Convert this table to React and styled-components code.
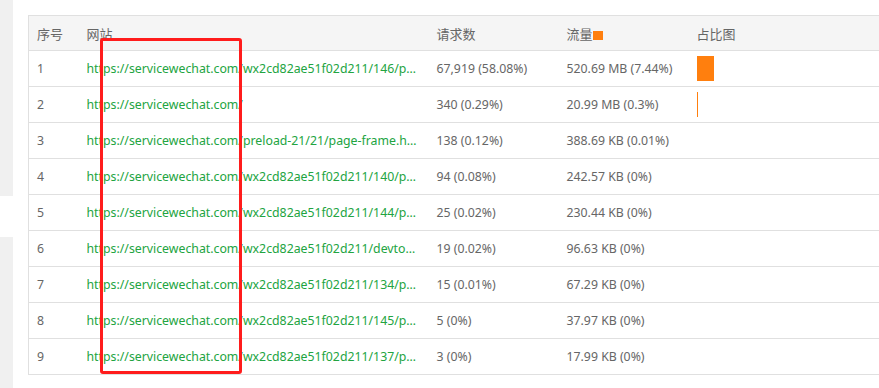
import styled, { createGlobalStyle } from "styled-components";

const rows = [
    {url: "https://servicewechat.com/wx2cd82ae51f02d211/146/page-frame.html", req: "67,919 (58.08%)", flow: "520.69 MB (7.44%)", bar: 17},
    {url: "https://servicewechat.com/", req: "340 (0.29%)", flow: "20.99 MB (0.3%)", bar: 1},
    {url: "https://servicewechat.com/preload-21/21/page-frame.html", req: "138 (0.12%)", flow: "388.69 KB (0.01%)", bar: 0},
    {url: "https://servicewechat.com/wx2cd82ae51f02d211/140/page-frame.html", req: "94 (0.08%)", flow: "242.57 KB (0%)", bar: 0},
    {url: "https://servicewechat.com/wx2cd82ae51f02d211/144/page-frame.html", req: "25 (0.02%)", flow: "230.44 KB (0%)", bar: 0},
    {url: "https://servicewechat.com/wx2cd82ae51f02d211/devtools/page-frame.html", req: "19 (0.02%)", flow: "96.63 KB (0%)", bar: 0},
    {url: "https://servicewechat.com/wx2cd82ae51f02d211/134/page-frame.html", req: "15 (0.01%)", flow: "67.29 KB (0%)", bar: 0},
    {url: "https://servicewechat.com/wx2cd82ae51f02d211/145/page-frame.html", req: "5 (0%)", flow: "37.97 KB (0%)", bar: 0},
    {url: "https://servicewechat.com/wx2cd82ae51f02d211/137/page-frame.html", req: "3 (0%)", flow: "17.99 KB (0%)", bar: 0},
];

function App() {
    return (
        <>
            <GlobalStyle/>
            <Page>
                <SideStrip>
                    <StripBlock $height={196}/>
                    <StripGap/>
                    <StripBlock/>
                </SideStrip>
                <Content>
                    <Table>
                        <colgroup>
                            <col style={{width: 50}}/>
                            <col style={{width: 350}}/>
                            <col style={{width: 130}}/>
                            <col style={{width: 130}}/>
                            <col/>
                        </colgroup>
                        <thead>
                        <tr>
                            <th>序号</th>
                            <th>网站</th>
                            <th>请求数</th>
                            <th>流量<Swatch/></th>
                            <th>占比图</th>
                        </tr>
                        </thead>
                        <tbody>
                        {rows.map((row, index) => (
                            <tr key={index}>
                                <td>{index + 1}</td>
                                <td><Link href="#">{row.url}</Link></td>
                                <td>{row.req}</td>
                                <td>{row.flow}</td>
                                <td>{row.bar > 0 && <Bar style={{width: row.bar}}/>}</td>
                            </tr>
                        ))}
                        </tbody>
                    </Table>
                    <Highlight/>
                </Content>
            </Page>
        </>
    );
}

const GlobalStyle = createGlobalStyle`
  html, body {
    margin: 0;
    padding: 0;
    background: #fff;
    overflow: hidden;
  }

  body {
    font-family: "Noto Sans", "Noto Sans CJK SC", sans-serif;
    font-size: 12.3px;
    color: #666;
  }
`;

const Page = styled.div`
  display: flex;
  width: 879px;
  height: 388px;
  overflow: hidden;
`;

const SideStrip = styled.div`
  display: flex;
  flex-direction: column;
  width: 13px;
  flex-shrink: 0;
`;

const StripBlock = styled.div`
  background: #f0f0f0;
  height: ${p => p.$height ? `${p.$height}px` : "auto"};
  flex: ${p => p.$height ? "none" : 1};
`;

const StripGap = styled.div`
  height: 41px;
`;

const Content = styled.div`
  position: relative;
  padding: 15px 0 0 15px;
  flex: 1;
`;

const Table = styled.table`
  width: 900px;
  border-collapse: collapse;
  table-layout: fixed;
  border: 1px solid #e0e0e0;

  th, td {
    text-align: left;
    padding: 0 4px 0 8px;
    white-space: nowrap;
    overflow: hidden;
    font-weight: normal;
    border-bottom: 1px solid #e0e0e0;
  }

  th {
    height: 34px;
    background: #f5f5f5;
    color: #666;
    font-size: 13px;
  }

  td {
    height: 35px;
  }
`;

const Link = styled.a`
  display: block;
  max-width: 331px;
  overflow: hidden;
  text-overflow: ellipsis;
  white-space: nowrap;
  color: #22a441;
  text-decoration: none;
`;

const Swatch = styled.span`
  display: inline-block;
  width: 10px;
  height: 9px;
  background: #ff7f0e;
  vertical-align: -1px;
`;

const Bar = styled.div`
  height: 25px;
  background: #ff7f0e;
`;

const Highlight = styled.div`
  position: absolute;
  left: 87px;
  top: 38px;
  width: 136px;
  height: 330px;
  border: 3px solid #ff1c1c;
  border-radius: 3px;
  pointer-events: none;
`;

export default App;
